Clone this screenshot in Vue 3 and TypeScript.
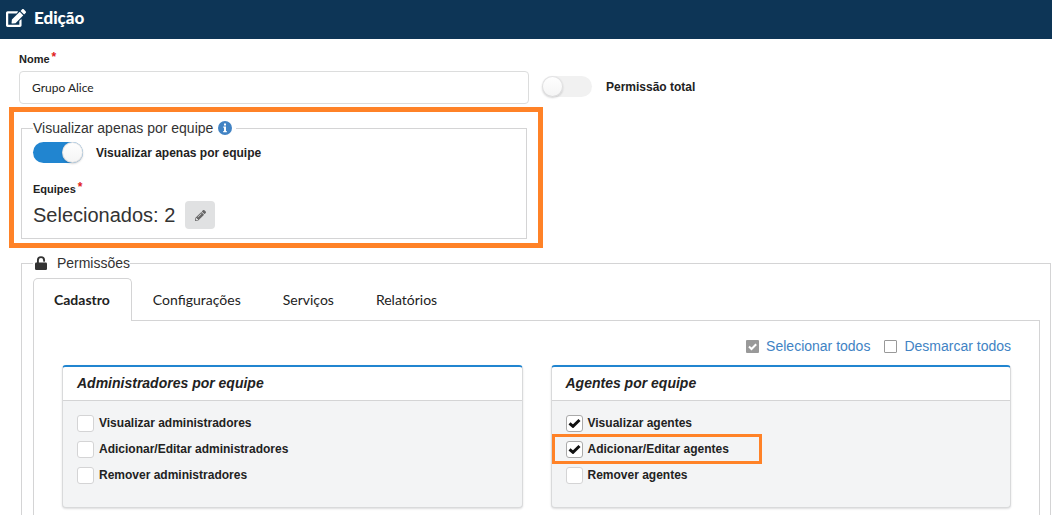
<script setup lang="ts">
import { ref } from 'vue'

interface Permission {
  id: string
  label: string
  checked: boolean
  highlighted?: boolean
}

interface PermissionGroup {
  title: string
  items: Permission[]
}

const name = ref('Grupo Alice')
const fullAccess = ref(false)
const teamOnly = ref(true)
const selectedTeams = ref(2)
const tabs = ['Cadastro', 'Configurações', 'Serviços', 'Relatórios']
const activeTab = ref('Cadastro')

const groups = ref<PermissionGroup[]>([
  {
    title: 'Administradores por equipe',
    items: [
      { id: 'admin-view', label: 'Visualizar administradores', checked: false },
      { id: 'admin-edit', label: 'Adicionar/Editar administradores', checked: false },
      { id: 'admin-remove', label: 'Remover administradores', checked: false },
    ],
  },
  {
    title: 'Agentes por equipe',
    items: [
      { id: 'agent-view', label: 'Visualizar agentes', checked: true },
      { id: 'agent-edit', label: 'Adicionar/Editar agentes', checked: true, highlighted: true },
      { id: 'agent-remove', label: 'Remover agentes', checked: false },
    ],
  },
])

function setAll(value: boolean): void {
  groups.value.forEach((group) => group.items.forEach((item) => (item.checked = value)))
}
</script>

<template>
  <div class="page">
    <header class="topbar">
      <svg class="topbar-icon" viewBox="0 0 576 512" aria-hidden="true">
        <path d="M402.6 83.2l90.2 90.2c3.8 3.8 3.8 10 0 13.800L274.400 405.600l-92.800 10.300c-12.400 1.400-22.900-9.100-21.500-21.500l10.300-92.800L388.800 83.200c3.800-3.800 10-3.800 13.800 0zm162-22.900l-48.800-48.800c-15.200-15.200-39.900-15.200-55.200 0l-35.400 35.400c-3.800 3.800-3.800 10 0 13.800l90.200 90.200c3.800 3.800 10 3.800 13.800 0l35.400-35.400c15.200-15.300 15.200-40 0-55.200zM384 346.200V448H64V128h229.800c3.200 0 6.200-1.300 8.500-3.500l40-40c7.600-7.600 2.200-20.500-8.500-20.500H48C21.500 64 0 85.500 0 112v352c0 26.500 21.500 48 48 48h352c26.500 0 48-21.500 48-48V306.200c0-10.700-12.900-16-20.500-8.500l-40 40c-2.200 2.300-3.500 5.300-3.500 8.500z" />
      </svg>
      <h1>Edição</h1>
    </header>

    <form class="form" @submit.prevent>
      <div class="columns">
        <div class="field">
          <label class="field-label" for="group-name">Nome<span class="required">*</span></label>
          <input id="group-name" v-model="name" class="text-input" type="text" required />
        </div>
        <label class="switch full-access">
          <input v-model="fullAccess" type="checkbox" />
          <span>Permissão total</span>
        </label>
      </div>

      <div class="columns">
        <div class="highlight">
          <fieldset class="team">
            <legend>
              Visualizar apenas por equipe
              <svg class="info" viewBox="0 0 14 14" aria-hidden="true">
                <circle cx="7" cy="7" r="7" fill="#4183c4" />
                <path d="M6 2.500h2v2H6zM5.300 5.500H8V10h.8v1.200H5.200V10H6V6.700h-.7z" fill="#fff" />
              </svg>
            </legend>
            <label class="switch">
              <input v-model="teamOnly" type="checkbox" />
              <span>Visualizar apenas por equipe</span>
            </label>
            <div class="field-label teams-label">Equipes<span class="required">*</span></div>
            <div class="selection">
              <span>Selecionados: {{ selectedTeams }}</span>
              <button type="button" class="edit" aria-label="Editar equipes">
                <svg viewBox="0 0 512 512" aria-hidden="true">
                  <path d="M497.900 142.100l-46.100 46.100c-4.700 4.700-12.300 4.700-17 0l-111-111c-4.700-4.700-4.700-12.300 0-17l46.100-46.100c18.700-18.700 49.100-18.700 67.900 0l60.100 60.100c18.800 18.700 18.800 49.100 0 67.900zM284.200 99.800L21.600 362.400.4 483.900c-2.900 16.400 11.400 30.600 27.800 27.800l121.500-21.300 262.600-262.600c4.700-4.700 4.700-12.300 0-17l-111-111c-4.800-4.700-12.400-4.700-17.100 0zM124.100 339.900c-5.500-5.500-5.500-14.300 0-19.800l154-154c5.500-5.500 14.300-5.500 19.800 0s5.500 14.300 0 19.800l-154 154c-5.500 5.500-14.300 5.500-19.800 0zM88 424h48v36.300l-64.500 11.300-31.100-31.100L51.700 376H88v48z" />
                </svg>
              </button>
            </div>
          </fieldset>
        </div>
      </div>

      <fieldset class="permissions">
        <legend>
          <svg class="lock" viewBox="0 0 12 14" aria-hidden="true">
            <path d="M2.900 7V4.200a3.100 3.100 0 0 1 6.200 0v.7" fill="none" stroke="currentColor" stroke-width="1.900" stroke-linecap="round" />
            <rect y="6.500" width="12" height="7.500" rx="1.200" fill="currentColor" />
          </svg>
          Permissões
        </legend>

        <div class="tabs" role="tablist">
          <button
            v-for="tab in tabs"
            :key="tab"
            type="button"
            role="tab"
            class="tab"
            :class="{ active: tab === activeTab }"
            :aria-selected="tab === activeTab"
            @click="activeTab = tab"
          >
            {{ tab }}
          </button>
        </div>

        <div class="panel" role="tabpanel">
          <div class="bulk">
            <a href="#" @click.prevent="setAll(true)">
              <svg viewBox="0 0 13 13" aria-hidden="true">
                <rect width="13" height="13" rx="1" fill="#999" />
                <path d="M3 6.500l2.500 2.500 4.700-4.800" fill="none" stroke="#fff" stroke-width="2" />
              </svg>
              Selecionar todos
            </a>
            <a href="#" @click.prevent="setAll(false)">
              <svg viewBox="0 0 13 13" aria-hidden="true">
                <rect x=".5" y=".5" width="12" height="12" rx=".5" fill="#fff" stroke="#999" />
              </svg>
              Desmarcar todos
            </a>
          </div>

          <div class="cards">
            <section v-for="group in groups" :key="group.title" class="card">
              <h2>{{ group.title }}</h2>
              <ul>
                <li v-for="item in group.items" :key="item.id" :class="{ marked: item.highlighted }">
                  <label class="check" :for="item.id">
                    <span class="box">
                      <input :id="item.id" v-model="item.checked" type="checkbox" />
                      <svg v-if="item.checked" viewBox="0 0 13 10" aria-hidden="true">
                        <path d="M1.500 5.300L5 8.300 11.500 2" fill="none" stroke="#111" stroke-width="3" />
                      </svg>
                    </span>
                    {{ item.label }}
                  </label>
                </li>
              </ul>
            </section>
          </div>
        </div>
      </fieldset>
    </form>
  </div>
</template>

<style>
body {
  margin: 0;
  background: #fff;
}
</style>

<style scoped>
* {
  box-sizing: border-box;
}

.page {
  display: flex;
  flex-direction: column;
  height: 100vh;
  overflow: hidden;
  font-family: "Liberation Sans", Arial, sans-serif;
  font-size: 14px;
  color: #222;
}

.topbar {
  display: flex;
  flex: none;
  align-items: center;
  gap: 8px;
  height: 39px;
  padding: 0 6px 3px;
  background: #0d3556;
  color: #fff;
}

.topbar-icon {
  width: 20px;
  height: 18px;
  fill: currentColor;
}

h1 {
  margin: 0;
  font: 900 17px/24px Lato, sans-serif;
}

.form {
  display: flex;
  flex: 1;
  flex-direction: column;
  min-height: 0;
  padding: 12px 1px 0 19px;
}

.columns {
  display: grid;
  grid-template-columns: 1fr 1fr;
  gap: 12px;
}

.field-label {
  display: block;
  height: 15px;
  font-size: 11px;
  font-weight: 700;
  line-height: 14px;
}

.required {
  margin-left: 2px;
  color: #e02020;
  font-size: 12px;
  line-height: 1;
  vertical-align: 2px;
}

.text-input {
  display: block;
  width: 100%;
  height: 33px;
  margin-top: 5px;
  padding: 0 12px;
  border: 1px solid #dcdddd;
  border-radius: 4px;
  background: #fff;
  color: #222;
  font: 12px Lato, sans-serif;
}

.switch {
  display: flex;
  align-items: center;
  gap: 13px;
  font-size: 12px;
  font-weight: 700;
  line-height: 20px;
}

.full-access {
  align-self: end;
  gap: 14px;
  padding: 0 0 7px 1px;
}

.switch input {
  display: flex;
  flex: none;
  width: 50px;
  height: 21px;
  margin: 0;
  border-radius: 11px;
  background: #f1f1f1;
  appearance: none;
}

.switch input::before {
  content: "";
  width: 21px;
  height: 21px;
  border-radius: 50%;
  background: linear-gradient(#fff, #f4f4f4);
  box-shadow: 0 1px 2px rgba(34, 36, 38, 0.2), 0 0 0 1px rgba(34, 36, 38, 0.12) inset;
}

.switch input:checked {
  justify-content: flex-end;
  background: #2185d0;
}

.highlight {
  margin: 3px -14px 0 -10px;
  padding: 8px 11px 4px 7px;
  border: 5px solid #ff8227;
}

fieldset {
  min-width: 0;
  margin: 0;
  border: 1px solid #d4d4d5;
}

legend {
  padding: 0;
  font-size: 14px;
  line-height: 16px;
  color: #333;
}

.team {
  padding: 6px 11px 9px;
}

.team legend {
  padding-right: 4px;
}

.info {
  width: 14px;
  height: 14px;
  margin-left: 1px;
  vertical-align: -2px;
}

.teams-label {
  margin-top: 18px;
}

.selection {
  display: flex;
  align-items: center;
  gap: 10px;
  margin-top: 5px;
  font-size: 20px;
  line-height: 28px;
  color: #333;
}

.edit {
  display: grid;
  place-items: center;
  width: 30px;
  height: 28px;
  padding: 0;
  border: 0;
  border-radius: 4px;
  background: #e0e1e2;
}

.edit svg {
  width: 11px;
  height: 11px;
  fill: #666;
}

.permissions {
  display: flex;
  flex: 1;
  flex-direction: column;
  margin: 7px 0 0 2px;
  padding: 7px 10px 0 11px;
  border-bottom: 0;
}

.permissions legend {
  padding-left: 2px;
}

.lock {
  width: 12px;
  height: 14px;
  margin-right: 6px;
  vertical-align: -2px;
}

.tabs {
  position: relative;
  display: flex;
  margin-bottom: -1px;
}

.tab {
  height: 43px;
  padding: 0 21px;
  border: 0;
  background: transparent;
  color: #222;
  font: 14px Lato, sans-serif;
}

.tab.active {
  padding: 0 21px 1px 20px;
  border: 1px solid #d4d4d5;
  border-bottom: 0;
  border-radius: 5px 5px 0 0;
  background: #fff;
  font-weight: 700;
}

.panel {
  flex: 1;
  padding: 15px 28px 0;
  border: 1px solid #d4d4d5;
  border-bottom: 0;
}

.bulk {
  display: flex;
  justify-content: flex-end;
  gap: 14px;
  line-height: 20px;
}

.bulk a {
  display: flex;
  align-items: center;
  gap: 7px;
  color: #4183c4;
  text-decoration: none;
}

.bulk svg {
  width: 13px;
  height: 13px;
}

.cards {
  display: grid;
  grid-template-columns: 1fr 1fr;
  gap: 28px;
  margin-top: 9px;
}

.card {
  border: 1px solid #d9dadb;
  border-top: 2px solid #2185d0;
  border-radius: 4px;
  background: #f3f4f5;
  box-shadow: 0 1px 2px rgba(34, 36, 38, 0.15);
}

.card h2 {
  margin: 0;
  padding: 6px 14px 7px;
  border-bottom: 1px solid #d4d4d5;
  border-radius: 3px 3px 0 0;
  background: #fff;
  font-size: 14px;
  font-style: italic;
  line-height: 20px;
}

.card ul {
  display: grid;
  grid-auto-rows: 26px;
  margin: 0;
  padding: 9px 14px 19px;
  list-style: none;
}

.card li {
  position: relative;
  display: flex;
  align-items: center;
}

.marked::after {
  content: "";
  position: absolute;
  inset: -2px auto -2px -14px;
  width: 204px;
  border: 3px solid #ff8227;
  pointer-events: none;
}

.check {
  display: flex;
  align-items: center;
  gap: 5px;
  font-size: 12px;
  font-weight: 700;
  line-height: 16px;
}

.box {
  display: grid;
  place-items: center;
}

.box > * {
  grid-area: 1 / 1;
}

.box input {
  width: 17px;
  height: 17px;
  margin: 0;
  border: 1px solid #d4d4d5;
  border-radius: 3px;
  background: #fff;
  appearance: none;
}

.box input:checked {
  border-color: #aaa;
}

.box svg {
  width: 13px;
  height: 10px;
  pointer-events: none;
}
</style>
